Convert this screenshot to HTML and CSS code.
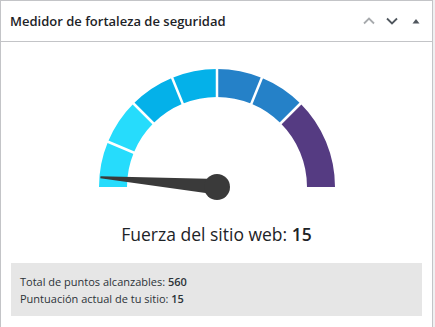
FILE: index.html
```html
<!DOCTYPE html>
<html lang="es">
<head>
    <meta charset="UTF-8">
    <meta name="viewport" content="width=device-width, initial-scale=1.0">
    <title>Medidor de fortaleza de seguridad</title>
    <link rel="stylesheet" href="styles.css">
</head>
<body>
    <div class="postbox">
        <div class="postbox-header">
            <h2 class="hndle">Medidor de fortaleza de seguridad</h2>
            <div class="handle-actions">
                <button class="handle-btn up" type="button" aria-label="Mover arriba">
                    <svg width="14" height="10" viewBox="0 0 14 10"><path d="M2 7.5 L7 2.5 L12 7.5" fill="none" stroke="currentColor" stroke-width="1.8"/></svg>
                </button>
                <button class="handle-btn down" type="button" aria-label="Mover abajo">
                    <svg width="14" height="10" viewBox="0 0 14 10"><path d="M2 2.5 L7 7.5 L12 2.5" fill="none" stroke="currentColor" stroke-width="1.8"/></svg>
                </button>
                <button class="handle-btn toggle" type="button" aria-label="Alternar panel">
                    <svg width="10" height="8" viewBox="0 0 10 8"><path d="M1.5 6.5 L5 2 L8.5 6.5 Z" fill="currentColor"/></svg>
                </button>
            </div>
        </div>

        <div class="inside">
            <svg class="gauge" width="240" height="136" viewBox="0 0 240 136">
                <!-- segments, left to right -->
                <path d="M2 120 A118 118 0 0 1 36.56 36.56 L56.36 56.36 A90 90 0 0 0 30 120 Z" fill="#26dcfc"/>
                <path d="M36.56 36.56 A118 118 0 0 1 120 2 L120 30 A90 90 0 0 0 56.36 56.36 Z" fill="#04b1e9"/>
                <path d="M120 2 A118 118 0 0 1 203.44 36.56 L183.64 56.36 A90 90 0 0 0 120 30 Z" fill="#2581c8"/>
                <path d="M203.44 36.56 A118 118 0 0 1 238 120 L210 120 A90 90 0 0 0 183.64 56.36 Z" fill="#553b82"/>

                <!-- gaps -->
                <g stroke="#fff" stroke-width="2.5">
                    <line x1="8" y1="73.5" x2="40" y2="87"/>
                    <line x1="33" y1="33" x2="59" y2="59"/>
                    <line x1="74" y1="8" x2="87" y2="40"/>
                    <line x1="120" y1="0" x2="120" y2="33"/>
                    <line x1="166" y1="8" x2="153" y2="40"/>
                    <line x1="207" y1="33" x2="181" y2="59"/>
                </g>

                <!-- needle at 15 / 560 -->
                <polygon points="3.5,109.3 3.3,111.3 119.3,127.6 120.7,111.9" fill="#3a3a3a"/>
                <circle cx="120" cy="120" r="13" fill="#3a3a3a"/>
            </svg>

            <p class="strength">Fuerza del sitio web: <strong>15</strong></p>

            <div class="stats">
                <p>Total de puntos alcanzables: <strong>560</strong></p>
                <p>Puntuación actual de tu sitio: <strong>15</strong></p>
            </div>
        </div>
    </div>
</body>
</html>
```

FILE: styles.css
```css
body {
    margin: 0;
    background: #f0f0f1;
    font-family: 'Open Sans', 'Noto Sans', Arial, sans-serif;
    color: #1d2327;
}

.postbox {
    width: 433px;
    min-height: 340px;
    box-sizing: border-box;
    background: #fff;
    border: 1px solid #c3c4c7;
}

.postbox-header {
    display: flex;
    align-items: center;
    justify-content: space-between;
    height: 40px;
    border-bottom: 1px solid #c3c4c7;
}

.hndle {
    margin: 0;
    padding-left: 9px;
    font-size: 13px;
    font-weight: 600;
}

.handle-actions {
    display: flex;
    align-items: center;
    padding-right: 3px;
}

.handle-btn {
    display: flex;
    align-items: center;
    justify-content: center;
    width: 23px;
    height: 36px;
    padding: 0;
    border: none;
    background: none;
    color: #50575e;
    cursor: pointer;
}

.handle-btn.up {
    color: #a7aaad;
}

.handle-btn.toggle {
    width: 26px;
}

.inside {
    padding: 25px 10px 0;
    display: flex;
    flex-direction: column;
    align-items: center;
}

.gauge {
    display: block;
}

.strength {
    margin: 17px 0 0;
    font-size: 17.5px;
    line-height: 28px;
    color: #1d2327;
}

.strength strong {
    font-weight: 600;
}

.stats {
    align-self: stretch;
    margin-top: 15px;
    padding: 10px 9px 9px;
    background: #e6e6e6;
}

.stats p {
    margin: 0;
    font-size: 11px;
    line-height: 17px;
    color: #2c3338;
}

.stats strong {
    font-weight: 600;
}
```
